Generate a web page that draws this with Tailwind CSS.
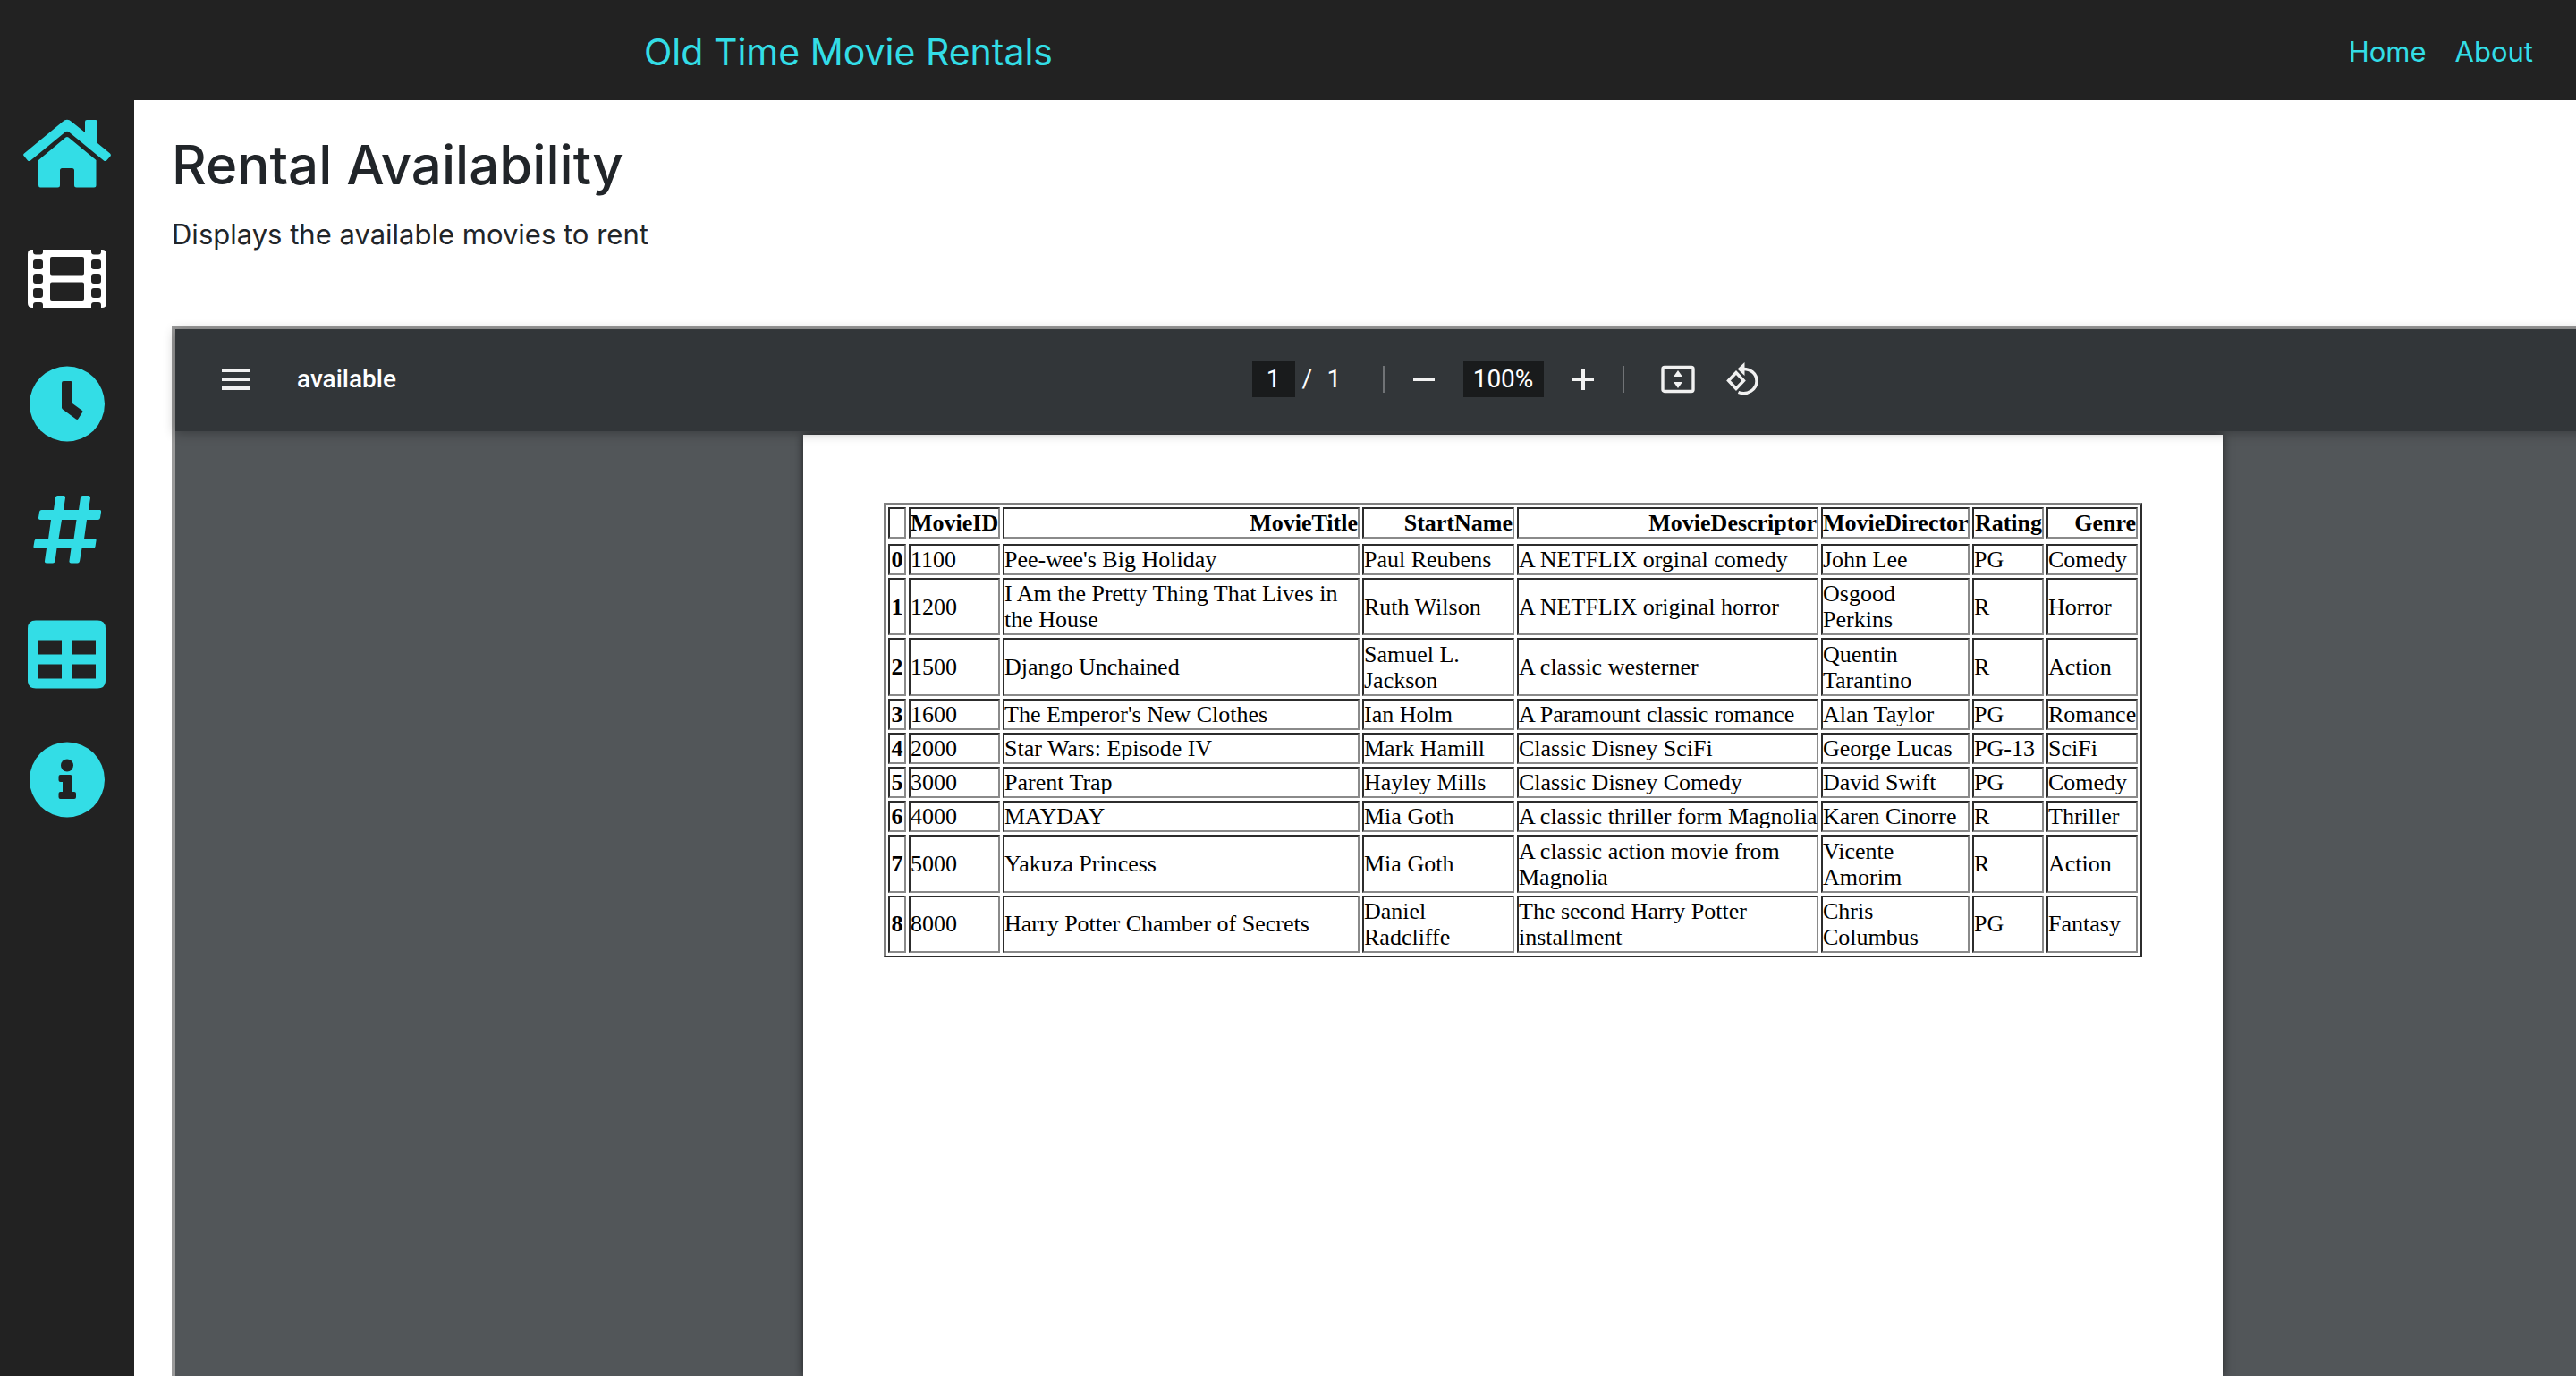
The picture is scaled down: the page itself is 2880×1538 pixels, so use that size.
<!DOCTYPE html>
<html lang="en">
<head>
<meta charset="utf-8">
<title>Old Time Movie Rentals</title>
<script src="https://cdn.jsdelivr.net/npm/@tailwindcss/browser@4"></script>
</head>
<body class="flex h-screen flex-col overflow-hidden bg-white font-[Inter,sans-serif] text-[#212529]">
<header class="flex h-28 shrink-0 items-center justify-between bg-[#222222] pt-1 pr-12 pl-[25%] text-[#33dde6]">
  <a href="#" class="text-[41px] leading-[60px]">Old Time Movie Rentals</a>
  <nav class="flex gap-8 text-[31px] leading-12">
    <a href="#">Home</a>
    <a href="#">About</a>
  </nav>
</header>
<div class="flex min-h-0 grow">
  <nav aria-label="Sections" class="flex w-[150px] shrink-0 flex-col bg-[#222222] pt-[11px] text-[#33dde6]">
    <a href="#" aria-label="Home" class="flex h-[140px] justify-center">
      <svg class="h-[98px] w-[98px]" viewBox="0 0 98 98" fill="currentColor"><path d="M44 13Q49 8.500 54 13L69 25V13Q69 11 71 11H81Q83 11 83 13V37L97 48.500Q98.500 50 97.500 51.500L93 56.500Q91.500 57.500 90 56.500L51 24.500Q49 23 47 24.500L8 56.500Q6.500 57.500 5 56.500L.5 51Q-.5 49.500 1 48.500Z"/><path d="M47.500 30.500Q49 29.500 50.500 30.500L81.500 56V84Q81.500 86.500 79 86.500H59.500Q57 86.500 57 84V67.500Q57 65 54.500 65H43.500Q41 65 41 67.500V84Q41 86.500 38.500 86.500H19Q17 86.500 17 84V56Z"/></svg>
    </a>
    <a href="#" aria-label="Movies" class="flex h-[140px] justify-center text-white">
      <svg class="h-[98px] w-[88px]" viewBox="0 0 88 98"><path fill="currentColor" fill-rule="evenodd" d="M4 16H6V18.500Q6 21.500 9 21.500H14Q17 21.500 17 18.500V16H71V18.500Q71 21.500 74 21.500H79Q82 21.500 82 18.500V16H83Q88 16 88 21V76Q88 81 83 81H82V78Q82 75 79 75H74Q71 75 71 78V81H17V78Q17 75 14 75H9Q6 75 6 78V81H5Q0 81 0 76V21Q0 16 4 16ZM9 27Q6 27 6 30V35Q6 38 9 38H14Q17 38 17 35V30Q17 27 14 27ZM9 43Q6 43 6 46V51Q6 54 9 54H14Q17 54 17 51V46Q17 43 14 43ZM9 59Q6 59 6 62V67Q6 70 9 70H14Q17 70 17 67V62Q17 59 14 59ZM74 27Q71 27 71 30V35Q71 38 74 38H79Q82 38 82 35V30Q82 27 79 27ZM74 43Q71 43 71 46V51Q71 54 74 54H79Q82 54 82 51V46Q82 43 79 43ZM74 59Q71 59 71 62V67Q71 70 74 70H79Q82 70 82 67V62Q82 59 79 59ZM27 24Q25 24 25 26V42.500Q25 44.500 27 44.500H61Q63 44.500 63 42.500V26Q63 24 61 24ZM27 52.500Q25 52.500 25 54.500V71Q25 73 27 73H61Q63 73 63 71V54.500Q63 52.500 61 52.500Z"/></svg>
    </a>
    <a href="#" aria-label="Hours" class="flex h-[140px] justify-center">
      <svg class="h-[98px] w-[84px]" viewBox="0 0 84 98"><circle cx="42" cy="48.500" r="42" fill="currentColor"/><path fill="#222" d="M38 23H46Q48 23 48 25V48L59 56Q60 57 59 58L54.500 65Q53.500 66.500 52 65.500L37 54.500Q36 53.500 36 52.500V25Q36 23 38 23Z"/></svg>
    </a>
    <a href="#" aria-label="Numbers" class="flex h-[140px] justify-center">
      <svg class="h-[98px] w-[76px]" viewBox="0 0 76 98"><path fill="currentColor" fill-rule="evenodd" d="M27.500 11H34Q36.500 11 36 13.500L34 27H51L53 13Q53.500 11 55.500 11H62Q64 11 64 13.500L62 27H74.500Q76.500 27 76 29.500L75 36Q74.500 38 72.500 38H60L57 59.500H69.500Q71 59.500 70.500 61.500L69.500 68Q69 70 67 70H54.500L52 84.500Q51.500 86.500 49.500 86.500H42.500Q40 86.500 40.500 84L42.500 70H26.500L24.500 84.500Q24 86.500 22 86.500H15Q12.500 86.500 13 84L15 70H2.500Q0 70 .5 67.500L1.500 61.500Q2 59.500 4 59.500H17L20 38H8Q5.500 38 6 35.500L7 29Q7.500 27 9.500 27H23L25 13Q25.500 11 27.500 11ZM32 38L28.500 59.500H45.500L48.500 38Z"/></svg>
    </a>
    <a href="#" aria-label="Table" class="flex h-[140px] justify-center">
      <svg class="h-[98px] w-[88px]" viewBox="0 0 88 98"><path fill="currentColor" fill-rule="evenodd" d="M9 10.500H78Q87 10.500 87 19.500V77.500Q87 86.500 78 86.500H9Q0 86.500 0 77.500V19.500Q0 10.500 9 10.500ZM11 32.500V48.500H38V32.500ZM49 32.500V48.500H76V32.500ZM11 59.500V75.500H38V59.500ZM49 59.500V75.500H76V59.500Z"/></svg>
    </a>
    <a href="#" aria-label="Information" class="flex h-[140px] justify-center">
      <svg class="h-[98px] w-[84px]" viewBox="0 0 84 98"><circle cx="42" cy="48.500" r="42" fill="currentColor"/><circle cx="42" cy="32.500" r="7" fill="#222"/><path fill="#222" d="M34.500 43H45.500Q47.500 43 47.500 45V62H50Q52 62 52 64V68Q52 70 50 70H34.500Q32.500 70 32.500 68V64Q32.500 62 34.500 62H37V51H34.500Q32.500 51 32.500 49V45Q32.500 43 34.500 43Z"/></svg>
    </a>
  </nav>
  <main class="flex min-w-0 grow flex-col overflow-hidden pt-8 pl-[42px]">
    <h1 class="text-[60px] leading-20 font-medium">Rental Availability</h1>
    <p class="mt-3.5 text-[31px] leading-12">Displays the available movies to rent</p>
    <section aria-label="PDF viewer" class="mt-[78px] -mr-[311px] flex min-h-0 grow flex-col border-4 border-b-0 border-[#9a9a9a] bg-[#525659] font-[Roboto,sans-serif]">
      <div class="relative z-10 grid h-[114px] shrink-0 grid-cols-[1fr_auto_1fr] items-center bg-[#323639] pb-0.5 text-[28px] leading-10 text-white shadow-[0_2px_12px_rgba(0,0,0,0.3)]">
        <div class="flex items-center gap-[52px] pl-[52px]">
          <button aria-label="Menu" class="text-[#f1f1f1]"><svg class="h-6 w-8" viewBox="0 0 32 24" fill="currentColor"><path d="M0 0H32V4H0ZM0 10H32V14H0ZM0 20H32V24H0Z"/></svg></button>
          <span class="font-medium">available</span>
        </div>
        <div class="flex items-center pr-1 text-[#f1f1f1]">
          <input aria-label="Page number" value="1" class="h-10 w-12 bg-[#191b1c] text-center text-white">
          <span class="ml-2 w-7 text-white">/</span><span class="w-[62px] text-white">1</span>
          <span class="mr-3 h-[30px] w-0.5 bg-[#707376]"></span>
          <button aria-label="Zoom out" class="flex h-16 w-16 items-center justify-center"><svg class="h-8 w-8" viewBox="0 0 32 32"><path d="M4 16H28" stroke="currentColor" stroke-width="4"/></svg></button>
          <input aria-label="Zoom level" value="100%" class="mx-3 h-10 w-[90px] bg-[#191b1c] text-center text-white">
          <button aria-label="Zoom in" class="flex h-16 w-16 items-center justify-center"><svg class="h-8 w-8" viewBox="0 0 32 32"><path d="M4 16H28M16 4V28" stroke="currentColor" stroke-width="4"/></svg></button>
          <span class="mx-3 h-[30px] w-0.5 bg-[#707376]"></span>
          <button aria-label="Fit to page" class="ml-4 flex h-16 w-16 items-center justify-center"><svg class="h-10 w-10" viewBox="0 0 40 40"><rect x="3" y="6.500" width="34" height="27" rx="2" fill="none" stroke="currentColor" stroke-width="3.400"/><path fill="currentColor" d="M20 10L25 17H15ZM20 30L15 23H25Z"/></svg></button>
          <button aria-label="Rotate counterclockwise" class="ml-2 flex h-16 w-16 items-center justify-center"><svg class="h-10 w-10" viewBox="0 0 40 40"><path fill="none" stroke="currentColor" stroke-width="3.400" d="M4.500 21.500L13 12.500L21.500 21.500L13 30.500ZM20 8.500C29 8 36 13.500 36 22C36 31 26 38.500 15.500 34.500"/><path fill="currentColor" d="M22.500 1V16L14.500 8.500Z"/></svg></button>
        </div>
      </div>
      <div class="flex min-h-0 grow justify-center pt-1">
        <article class="w-[1587px] bg-white px-[90px] pt-[76px] font-['Liberation_Serif',serif] text-black shadow-[0_0_10px_rgba(0,0,0,0.6)]">
          <table class="h-[508px] w-[1407px] table-fixed border-separate border-spacing-[3px] border-2 border-t-[#808080] border-r-[#2c2c2c] border-b-[#2c2c2c] border-l-[#808080] text-[26px] leading-[29px] [&_td]:border-2 [&_td]:border-t-[#2c2c2c] [&_td]:border-r-[#8a8a8a] [&_td]:border-b-[#8a8a8a] [&_td]:border-l-[#2c2c2c] [&_td]:px-0 [&_td]:py-px [&_th]:border-2 [&_th]:border-t-[#2c2c2c] [&_th]:border-r-[#8a8a8a] [&_th]:border-b-[#8a8a8a] [&_th]:border-l-[#2c2c2c] [&_th]:px-0 [&_th]:py-px">
            <colgroup><col class="w-5"><col class="w-[102px]"><col class="w-[399px]"><col class="w-[170px]"><col class="w-[337px]"><col class="w-[166px]"><col class="w-20"><col class="w-[102px]"></colgroup>
            <thead class="text-right after:table-row after:content-['']">
              <tr><th></th><th>MovieID</th><th>MovieTitle</th><th>StartName</th><th>MovieDescriptor</th><th>MovieDirector</th><th>Rating</th><th>Genre</th></tr>
            </thead>
            <tbody>
              <tr><th>0</th><td>1100</td><td>Pee-wee's Big Holiday</td><td>Paul Reubens</td><td>A NETFLIX orginal comedy</td><td>John Lee</td><td>PG</td><td>Comedy</td></tr>
              <tr><th>1</th><td>1200</td><td>I Am the Pretty Thing That Lives in the House</td><td>Ruth Wilson</td><td>A NETFLIX original horror</td><td>Osgood Perkins</td><td>R</td><td>Horror</td></tr>
              <tr><th>2</th><td>1500</td><td>Django Unchained</td><td>Samuel L. Jackson</td><td>A classic westerner</td><td>Quentin Tarantino</td><td>R</td><td>Action</td></tr>
              <tr><th>3</th><td>1600</td><td>The Emperor's New Clothes</td><td>Ian Holm</td><td>A Paramount classic romance</td><td>Alan Taylor</td><td>PG</td><td>Romance</td></tr>
              <tr><th>4</th><td>2000</td><td>Star Wars: Episode IV</td><td>Mark Hamill</td><td>Classic Disney SciFi</td><td>George Lucas</td><td>PG-13</td><td>SciFi</td></tr>
              <tr><th>5</th><td>3000</td><td>Parent Trap</td><td>Hayley Mills</td><td>Classic Disney Comedy</td><td>David Swift</td><td>PG</td><td>Comedy</td></tr>
              <tr><th>6</th><td>4000</td><td>MAYDAY</td><td>Mia Goth</td><td class="whitespace-nowrap">A classic thriller form Magnolia</td><td>Karen Cinorre</td><td>R</td><td>Thriller</td></tr>
              <tr><th>7</th><td>5000</td><td>Yakuza Princess</td><td>Mia Goth</td><td>A classic action movie from Magnolia</td><td>Vicente Amorim</td><td>R</td><td>Action</td></tr>
              <tr><th>8</th><td>8000</td><td>Harry Potter Chamber of Secrets</td><td>Daniel Radcliffe</td><td>The second Harry Potter installment</td><td>Chris Columbus</td><td>PG</td><td>Fantasy</td></tr>
            </tbody>
          </table>
        </article>
      </div>
    </section>
  </main>
</div>
</body>
</html>
